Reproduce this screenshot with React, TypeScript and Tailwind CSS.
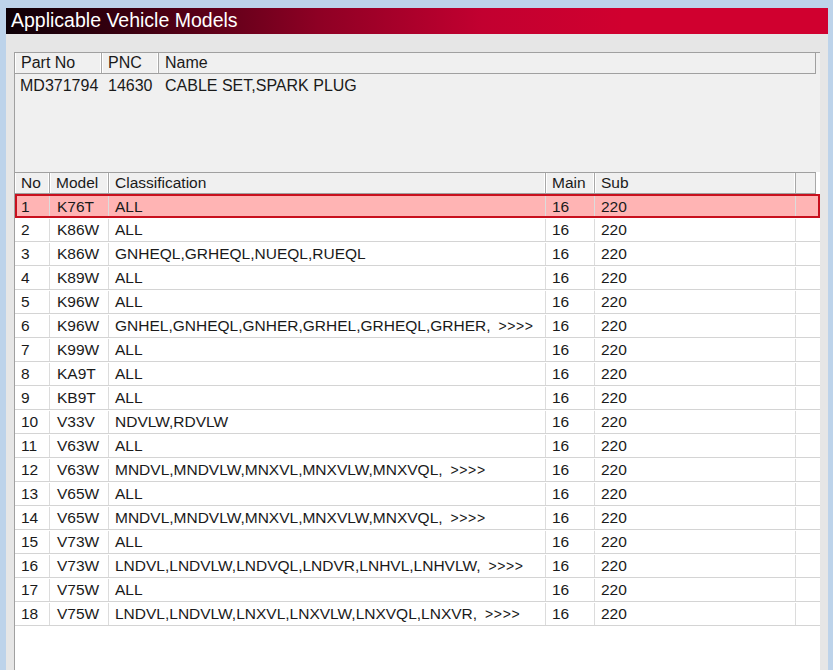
import React from "react";

type Row = {
  no: number;
  model: string;
  cls: string;
  more?: boolean;
};

const rows: Row[] = [
  { no: 1, model: "K76T", cls: "ALL" },
  { no: 2, model: "K86W", cls: "ALL" },
  { no: 3, model: "K86W", cls: "GNHEQL,GRHEQL,NUEQL,RUEQL" },
  { no: 4, model: "K89W", cls: "ALL" },
  { no: 5, model: "K96W", cls: "ALL" },
  { no: 6, model: "K96W", cls: "GNHEL,GNHEQL,GNHER,GRHEL,GRHEQL,GRHER,", more: true },
  { no: 7, model: "K99W", cls: "ALL" },
  { no: 8, model: "KA9T", cls: "ALL" },
  { no: 9, model: "KB9T", cls: "ALL" },
  { no: 10, model: "V33V", cls: "NDVLW,RDVLW" },
  { no: 11, model: "V63W", cls: "ALL" },
  { no: 12, model: "V63W", cls: "MNDVL,MNDVLW,MNXVL,MNXVLW,MNXVQL,", more: true },
  { no: 13, model: "V65W", cls: "ALL" },
  { no: 14, model: "V65W", cls: "MNDVL,MNDVLW,MNXVL,MNXVLW,MNXVQL,", more: true },
  { no: 15, model: "V73W", cls: "ALL" },
  { no: 16, model: "V73W", cls: "LNDVL,LNDVLW,LNDVQL,LNDVR,LNHVL,LNHVLW,", more: true },
  { no: 17, model: "V75W", cls: "ALL" },
  { no: 18, model: "V75W", cls: "LNDVL,LNDVLW,LNXVL,LNXVLW,LNXVQL,LNXVR,", more: true },
];

const HeadCell = ({ w, label }: { w: string; label: string }) => (
  <div
    className={`${w} shrink-0 h-full flex items-center pl-[6px] border-r border-r-[#a8a8a8] shadow-[inset_-1px_0_0_#ffffff,inset_1px_0_0_#ffffff] text-[#1a1a1a]`}
  >
    {label}
  </div>
);

export default function App() {
  return (
    <div
      className="w-[833px] h-[670px] overflow-hidden bg-[#bdd3ea] pt-[8px] pl-[6px] pr-[5px]"
      style={{ fontFamily: '"Liberation Sans", Arial, sans-serif' }}
    >
      <div className="h-full bg-[#e6e6e6] flex flex-col">
        {/* title bar */}
        <div className="h-[26px] shrink-0 flex items-center pl-[5px] text-white text-[19.5px] bg-[linear-gradient(to_right,#0d0006_0%,#3a0010_15%,#8e0024_38%,#c20030_58%,#d0002f_75%,#d0002f_100%)]">
          Applicable Vehicle Models
        </div>

        <div className="flex-1 flex flex-col pt-[18px] pl-[8px] pr-[8px] text-[16px] text-[#1a1a1a]">
          {/* part list */}
          <div className="h-[120px] shrink-0 bg-[#f0f0f0] border-l border-l-[#a0a0a0] border-t border-t-[#a0a0a0]">
            <div className="h-[21px] flex border-b border-b-[#a0a0a0] mr-[4px] border-r border-r-[#a0a0a0]">
              <HeadCell w="w-[87px]" label="Part No" />
              <HeadCell w="w-[57px]" label="PNC" />
              <div className="flex-1 flex items-center pl-[6px]">Name</div>
            </div>
            <div className="h-[24px] flex items-center">
              <div className="w-[87px] pl-[5px]">MD371794</div>
              <div className="w-[57px] pl-[6px]">14630</div>
              <div className="pl-[6px]">CABLE SET,SPARK PLUG</div>
            </div>
          </div>

          {/* model list */}
          <div className="flex-1 bg-white border-l border-l-[#a0a0a0] text-[15.5px]">
            <div className="h-[22px] flex bg-[#f0f0f0] border-t border-t-[#a0a0a0] border-b border-b-[#a0a0a0] mr-[4px]">
              <HeadCell w="w-[35px]" label="No" />
              <HeadCell w="w-[59px]" label="Model" />
              <HeadCell w="w-[437px]" label="Classification" />
              <HeadCell w="w-[49px]" label="Main" />
              <HeadCell w="w-[201px]" label="Sub" />
              <div className="flex-1 border-r border-r-[#a8a8a8]" />
            </div>
            {rows.map((r) => {
              const sel = r.no === 1;
              return (
                <div
                  key={r.no}
                  className={`h-[24px] flex items-center pt-[1px] ${
                    sel
                      ? "bg-[#ffb4b4] outline-2 -outline-offset-2 outline-[#c8101e]"
                      : "border-b border-b-[#d4d4d4]"
                  }`}
                >
                  <div className="w-[35px] h-full flex items-center pl-[6px] border-r border-r-[#dcdcdc]">
                    {r.no}
                  </div>
                  <div className="w-[59px] h-full flex items-center pl-[7px] border-r border-r-[#dcdcdc]">
                    {r.model}
                  </div>
                  <div className="w-[437px] h-full flex items-center pl-[6px] border-r border-r-[#dcdcdc] whitespace-pre">
                    {r.cls}
                    {r.more && (
                      <span className="text-[14px] pl-[8px] tracking-[0.6px]">{">>>>"}</span>
                    )}
                  </div>
                  <div className="w-[49px] h-full flex items-center pl-[6px] border-r border-r-[#dcdcdc]">
                    16
                  </div>
                  <div className="w-[201px] h-full flex items-center pl-[6px] border-r border-r-[#dcdcdc]">
                    220
                  </div>
                  <div className="flex-1" />
                </div>
              );
            })}
          </div>
        </div>
      </div>
    </div>
  );
}
